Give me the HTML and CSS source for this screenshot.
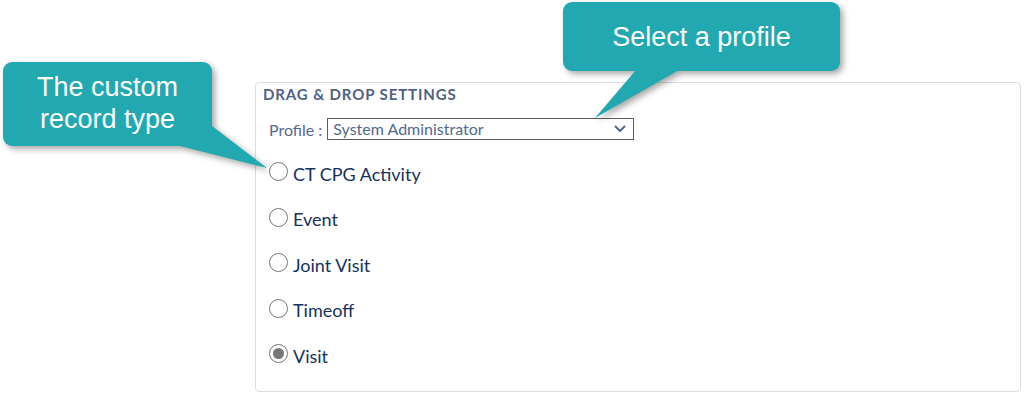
FILE: index.html
```html
<!DOCTYPE html>
<html>
<head>
<meta charset="utf-8">
<link rel="stylesheet" href="styles.css">
</head>
<body>
<div class="page">
  <section class="card">
    <h2 class="card-title">DRAG &amp; DROP SETTINGS</h2>
    <div class="profile-row">
      <span class="profile-label">Profile :</span>
      <div class="select">
        <span class="select-value">System Administrator</span>
        <svg class="chevron" width="12" height="8" viewBox="0 0 12 8"><path d="M1.5 1.5 L6 6 L10.5 1.5" fill="none" stroke="#54698d" stroke-width="2" stroke-linecap="round" stroke-linejoin="round"/></svg>
      </div>
    </div>
    <ul class="radio-list">
      <li class="radio-row"><span class="radio"></span><span class="radio-label">CT CPG Activity</span></li>
      <li class="radio-row"><span class="radio"></span><span class="radio-label">Event</span></li>
      <li class="radio-row"><span class="radio"></span><span class="radio-label">Joint Visit</span></li>
      <li class="radio-row"><span class="radio"></span><span class="radio-label">Timeoff</span></li>
      <li class="radio-row"><span class="radio checked"></span><span class="radio-label">Visit</span></li>
    </ul>
  </section>

  <svg class="callout-shapes" width="1026" height="399" viewBox="0 0 1026 399">
    <g class="callout-fill">
      <rect x="3" y="62" width="209" height="84" rx="9" ry="9"/>
      <polygon points="176,145 212,126 267,168"/>
      <rect x="563" y="2" width="277" height="69" rx="9" ry="9"/>
      <polygon points="636,70 679,70 595,118"/>
    </g>
  </svg>
  <div class="callout-text callout-left">The custom<br>record type</div>
  <div class="callout-text callout-right">Select a profile</div>
</div>
</body>
</html>
```

FILE: styles.css
```css
html, body {
  margin: 0;
  padding: 0;
  background: #ffffff;
}

.page {
  position: relative;
  width: 1026px;
  height: 399px;
  overflow: hidden;
  padding: 82px 0 0 255px;
  box-sizing: border-box;
  font-family: Lato, "Noto Sans", sans-serif;
}

.card {
  width: 766px;
  height: 310px;
  box-sizing: border-box;
  border: 1px solid #d8dde6;
  border-radius: 4px;
  padding: 3px 0 0 7px;
}

.card-title {
  margin: 0;
  font-size: 15px;
  line-height: 17px;
  font-weight: 700;
  letter-spacing: 0.9px;
  color: #4f6285;
}

.profile-row {
  display: flex;
  align-items: center;
  margin: 15px 0 0 6px;
}

.profile-label {
  font-size: 16px;
  color: #54698d;
  margin-right: 5px;
}

.select {
  display: flex;
  align-items: center;
  justify-content: space-between;
  width: 307px;
  height: 22px;
  box-sizing: border-box;
  border: 1px solid #5c5c5c;
  padding: 0 7px 0 5px;
}

.select-value {
  font-size: 16px;
  color: #54698d;
  line-height: 20px;
}

.chevron {
  display: block;
}

.radio-list {
  list-style: none;
  margin: 11px 0 0 6px;
  padding: 0;
}

.radio-row {
  display: flex;
  align-items: center;
  height: 45.5px;
}

.radio {
  width: 19px;
  height: 19px;
  box-sizing: border-box;
  border: 1px solid #767676;
  border-radius: 50%;
  margin-right: 5px;
  display: flex;
  align-items: center;
  justify-content: center;
  transform: translateY(-2px);
}

.radio.checked::after {
  content: "";
  width: 11px;
  height: 11px;
  border-radius: 50%;
  background: #767676;
}

.radio-label {
  font-size: 18px;
  color: #16325c;
  line-height: 22px;
}

.callout-shapes {
  position: absolute;
  left: 0;
  top: 0;
  pointer-events: none;
}

.callout-fill {
  fill: #22a8b0;
  filter: drop-shadow(3px 3px 3px rgba(0, 0, 0, 0.35));
}

.callout-text {
  position: absolute;
  color: #ffffff;
  font-family: "Liberation Sans", Arial, sans-serif;
  font-size: 27px;
  text-align: center;
}

.callout-left {
  left: 3px;
  top: 71px;
  width: 209px;
  line-height: 32px;
}

.callout-right {
  left: 563px;
  top: 21px;
  width: 277px;
  line-height: 32px;
}
```
